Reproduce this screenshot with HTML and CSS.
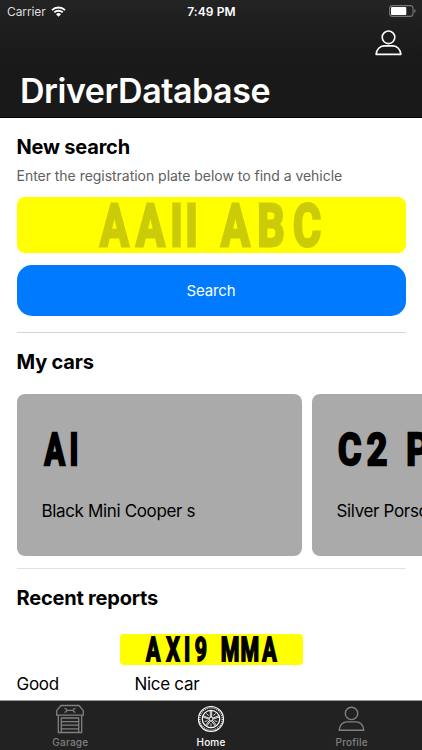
FILE: index.html
```
<!DOCTYPE html>
<html lang="en">
<head>
  <meta charset="UTF-8" />
  <title>DriverDatabase</title>
  <link rel="stylesheet" href="styles.css">
</head>
<body>
  <header class="header">
    <div class="status">
      <div class="carrier">
        <span>Carrier</span>
        <svg class="wifi" width="15" height="11" viewBox="0 0 15 11">
          <path d="M1 4.1a9.3 9.3 0 0 1 13 0M3.3 6.4a6 6 0 0 1 8.4 0" fill="none" stroke="#fff" stroke-width="1.9" />
          <path d="M7.5 10.7 5 8.2a3.6 3.6 0 0 1 5 0z" fill="#fff" />
        </svg>
      </div>
      <div class="time">7:49 PM</div>
      <svg class="battery" width="27" height="12" viewBox="0 0 27 12">
        <rect x=".6" y=".6" width="23.4" height="10.8" rx="2.8" fill="none" stroke="#777" stroke-width="1.1" />
        <rect x="2" y="2" width="15.3" height="8" rx="1" fill="#fff" />
        <path d="M25.2 4v4q1.4-.6 1.4-2t-1.4-2" fill="#777" />
      </svg>
    </div>
    <div class="account">
      <svg width="27" height="26" viewBox="0 0 27 26">
        <g fill="none" stroke="#fff" stroke-width="1.6" stroke-linejoin="round">
          <circle cx="13.5" cy="7.3" r="6.3" />
          <path d="M1.1 24.4C1.5 19.2 5 15.9 9 15.9h9c4 0 7.5 3.3 7.9 8.5z" />
        </g>
      </svg>
    </div>
    <h1>DriverDatabase</h1>
  </header>

  <main>
    <section class="new-search">
      <h2>New search</h2>
      <p class="hint">Enter the registration plate below to find a vehicle</p>
      <div class="plate plate-input">
        <svg class="reg reg-large" width="389" height="56">
          <text transform="translate(0 49) scale(.72 1)" x="135.4 185.4 221.6 242.3 269 303.5 352.7 402.8">AAII ABC</text>
        </svg>
      </div>
      <button class="search">Search</button>
    </section>

    <section class="my-cars">
      <h2>My cars</h2>
      <div class="cars">
        <div class="car">
          <svg class="reg reg-medium" width="230" height="40">
            <text transform="translate(0 36) scale(.68 1)" x="18.7 47.1">AI</text>
          </svg>
          <p>Black Mini Cooper s</p>
        </div>
        <div class="car">
          <svg class="reg reg-medium" width="230" height="40">
            <text transform="translate(0 36) scale(.8 1)" x="15.7 50 70.6 100.8 138 174">C2 POR</text>
          </svg>
          <p>Silver Porsche</p>
        </div>
      </div>
    </section>

    <section class="reports">
      <h2>Recent reports</h2>
      <div class="plate plate-small">
        <svg class="reg reg-small" width="183" height="31">
          <text transform="translate(0 26.5) scale(.66 1)" x="50.2 80.3 101.8 122.4 141 166.9 196.8 226.5">AXI9 MMA</text>
        </svg>
      </div>
      <div class="report">
        <span>Good</span>
        <span>Nice car</span>
      </div>
    </section>
  </main>

  <nav class="tabs">
    <a class="tab">
      <svg width="30" height="30" viewBox="0 0 30 30">
        <g fill="none" stroke="currentColor" stroke-width="1.3" stroke-linejoin="round">
          <path d="M6 1.5h18l4.3 5.2v4.5H1.7V6.7z" />
          <path d="M3.3 11.2v17.3h23.4V11.2M6.3 28.5V14h17.4v14.5M6.3 17.6h17.4M6.3 21.2h17.4M6.3 24.8h17.4" />
          <path d="M9.5 4.3q2 .2 2.5 2h6q.5-1.8 2.5-2M9.5 8.3q2-.2 2.5-2M20.5 8.3q-2-.2-2.5-2" />
        </g>
      </svg>
      <span>Garage</span>
    </a>
    <a class="tab active">
      <svg width="30" height="30" viewBox="0 0 30 30">
        <g fill="none" stroke="currentColor">
          <circle cx="15" cy="15" r="12.5" stroke-width="1.2" />
          <circle cx="15" cy="15" r="11.2" stroke-width="1.2" stroke-dasharray="1 1" />
          <circle cx="15" cy="15" r="8.7" stroke-width="1.2" />
          <circle cx="15" cy="15" r="2" />
          <path d="M14.3 6.5v6.6M15.7 6.5v6.6M22.9 11.7l-6 2.4M23.2 13l-6 2.1M20.6 21.5l-3.9-5M19.4 22.3l-3.8-5.2M9.4 21.5l3.9-5M10.6 22.3l3.8-5.2M7.1 11.7l6 2.4M6.8 13l6 2.1" stroke-width=".9" />
          <path d="M10.2 9.5l2.5 2M19.8 9.5l-2.5 2M8.7 17.5l3-.8M21.3 17.5l-3-.8M15 19.5v3" stroke-width=".8" />
        </g>
      </svg>
      <span>Home</span>
    </a>
    <a class="tab">
      <svg width="30" height="30" viewBox="0 0 30 30">
        <g fill="none" stroke="currentColor" stroke-width="1.4" stroke-linejoin="round">
          <circle cx="14.5" cy="9.4" r="6.2" />
          <path d="M2.2 26.2c.4-5.2 3.8-8.3 7.8-8.3h9c4 0 7.4 3.1 7.8 8.3z" />
        </g>
      </svg>
      <span>Profile</span>
    </a>
  </nav>
</body>
</html>
```

FILE: styles.css
```
* {
  box-sizing: border-box;
}
body {
  display: flex;
  flex-direction: column;
  height: 750px;
  margin: 0;
  overflow: hidden;
  font-family: Inter, "Liberation Sans", sans-serif;
  background: #fff;
  color: #000;
}
h1, h2, p {
  margin: 0;
}
.header {
  flex: none;
  height: 118px;
  background: linear-gradient(#232323, #191919 50%);
  border-bottom: 1px solid #000;
  color: #fff;
}
.status {
  display: grid;
  grid-template-columns: 1fr auto 1fr;
  align-items: center;
  height: 22px;
  padding: 0 6px 0 7px;
  font-size: 12px;
}
.carrier {
  display: flex;
  align-items: center;
  gap: 5px;
  color: #ddd;
}
.carrier span {
  letter-spacing: -.1px;
}
.time {
  font-weight: 600;
  letter-spacing: .1px;
}
.battery {
  justify-self: end;
}
.account {
  display: flex;
  justify-content: flex-end;
  padding: 8px 20px 0 0;
}
h1 {
  padding-left: 20px;
  margin-top: 14px;
  font-size: 34px;
  line-height: 42px;
  font-weight: 640;
  letter-spacing: -.45px;
}
main {
  flex: 1;
  min-height: 0;
  padding: 0 16.5px;
  overflow: hidden;
}
h2 {
  font-size: 20px;
  line-height: 24px;
  font-weight: 650;
  letter-spacing: -.2px;
}
.new-search {
  height: 214.5px;
  padding-top: 17px;
  border-bottom: 1px solid #d4d4d4;
}
.hint {
  margin-top: 7px;
  font-size: 14px;
  line-height: 20px;
  letter-spacing: -.03px;
  color: #606060;
}
.plate {
  background: #ff0;
  border-radius: 4px;
}
.plate-input {
  height: 56px;
  margin-top: 10.5px;
  border-radius: 8px;
}
/* number plate lettering */
.reg {
  display: block;
  overflow: visible;
  font-family: Roboto, sans-serif;
  font-weight: 700;
  text-anchor: middle;
  fill: #000;
  stroke: #000;
}
.reg text {
  vector-effect: non-scaling-stroke;
}
.reg-large {
  font-size: 59.6px;
  fill: #cbcb08;
  stroke: #cbcb08;
  stroke-width: 2.6px;
}
.reg-medium {
  font-size: 44.6px;
  stroke-width: 2.2px;
}
.reg-small {
  font-size: 32.3px;
  stroke-width: 1.5px;
}
.search {
  display: block;
  width: 100%;
  height: 51px;
  margin-top: 12.5px;
  border: none;
  border-radius: 15px;
  background: #007aff;
  color: #fff;
  font: 15px Inter, sans-serif;
  letter-spacing: -.1px;
}
.my-cars {
  height: 236.5px;
  padding-top: 17px;
  border-bottom: 1px solid #e2e2e2;
}
.cars {
  display: flex;
  gap: 10px;
  margin-top: 20.5px;
}
.car {
  flex: none;
  width: 285px;
  height: 161.5px;
  padding: 35px 25px 0;
  border-radius: 8px;
  background: #aaa;
}
.car p {
  margin-top: 30.5px;
  font-size: 17px;
  line-height: 22px;
  letter-spacing: -.35px;
}
.reports {
  padding-top: 17px;
}
.plate-small {
  width: 183px;
  height: 30.5px;
  margin: 24px auto 0;
}
.report {
  display: grid;
  grid-template-columns: 118px 1fr;
  margin-top: 8px;
  font-size: 17px;
  line-height: 22px;
  letter-spacing: -.3px;
}
.tabs {
  display: flex;
  flex: none;
  height: 50.5px;
  background: #222;
  border-top: 1px solid #999;
}
.tab {
  display: flex;
  flex: 1;
  flex-direction: column;
  align-items: center;
  padding-top: 3px;
  font-size: 10px;
  line-height: 14px;
  font-weight: 500;
  color: #808080;
}
.tab span {
  margin-top: 1.5px;
  letter-spacing: .2px;
}
.tab.active {
  color: #fff;
}
```
